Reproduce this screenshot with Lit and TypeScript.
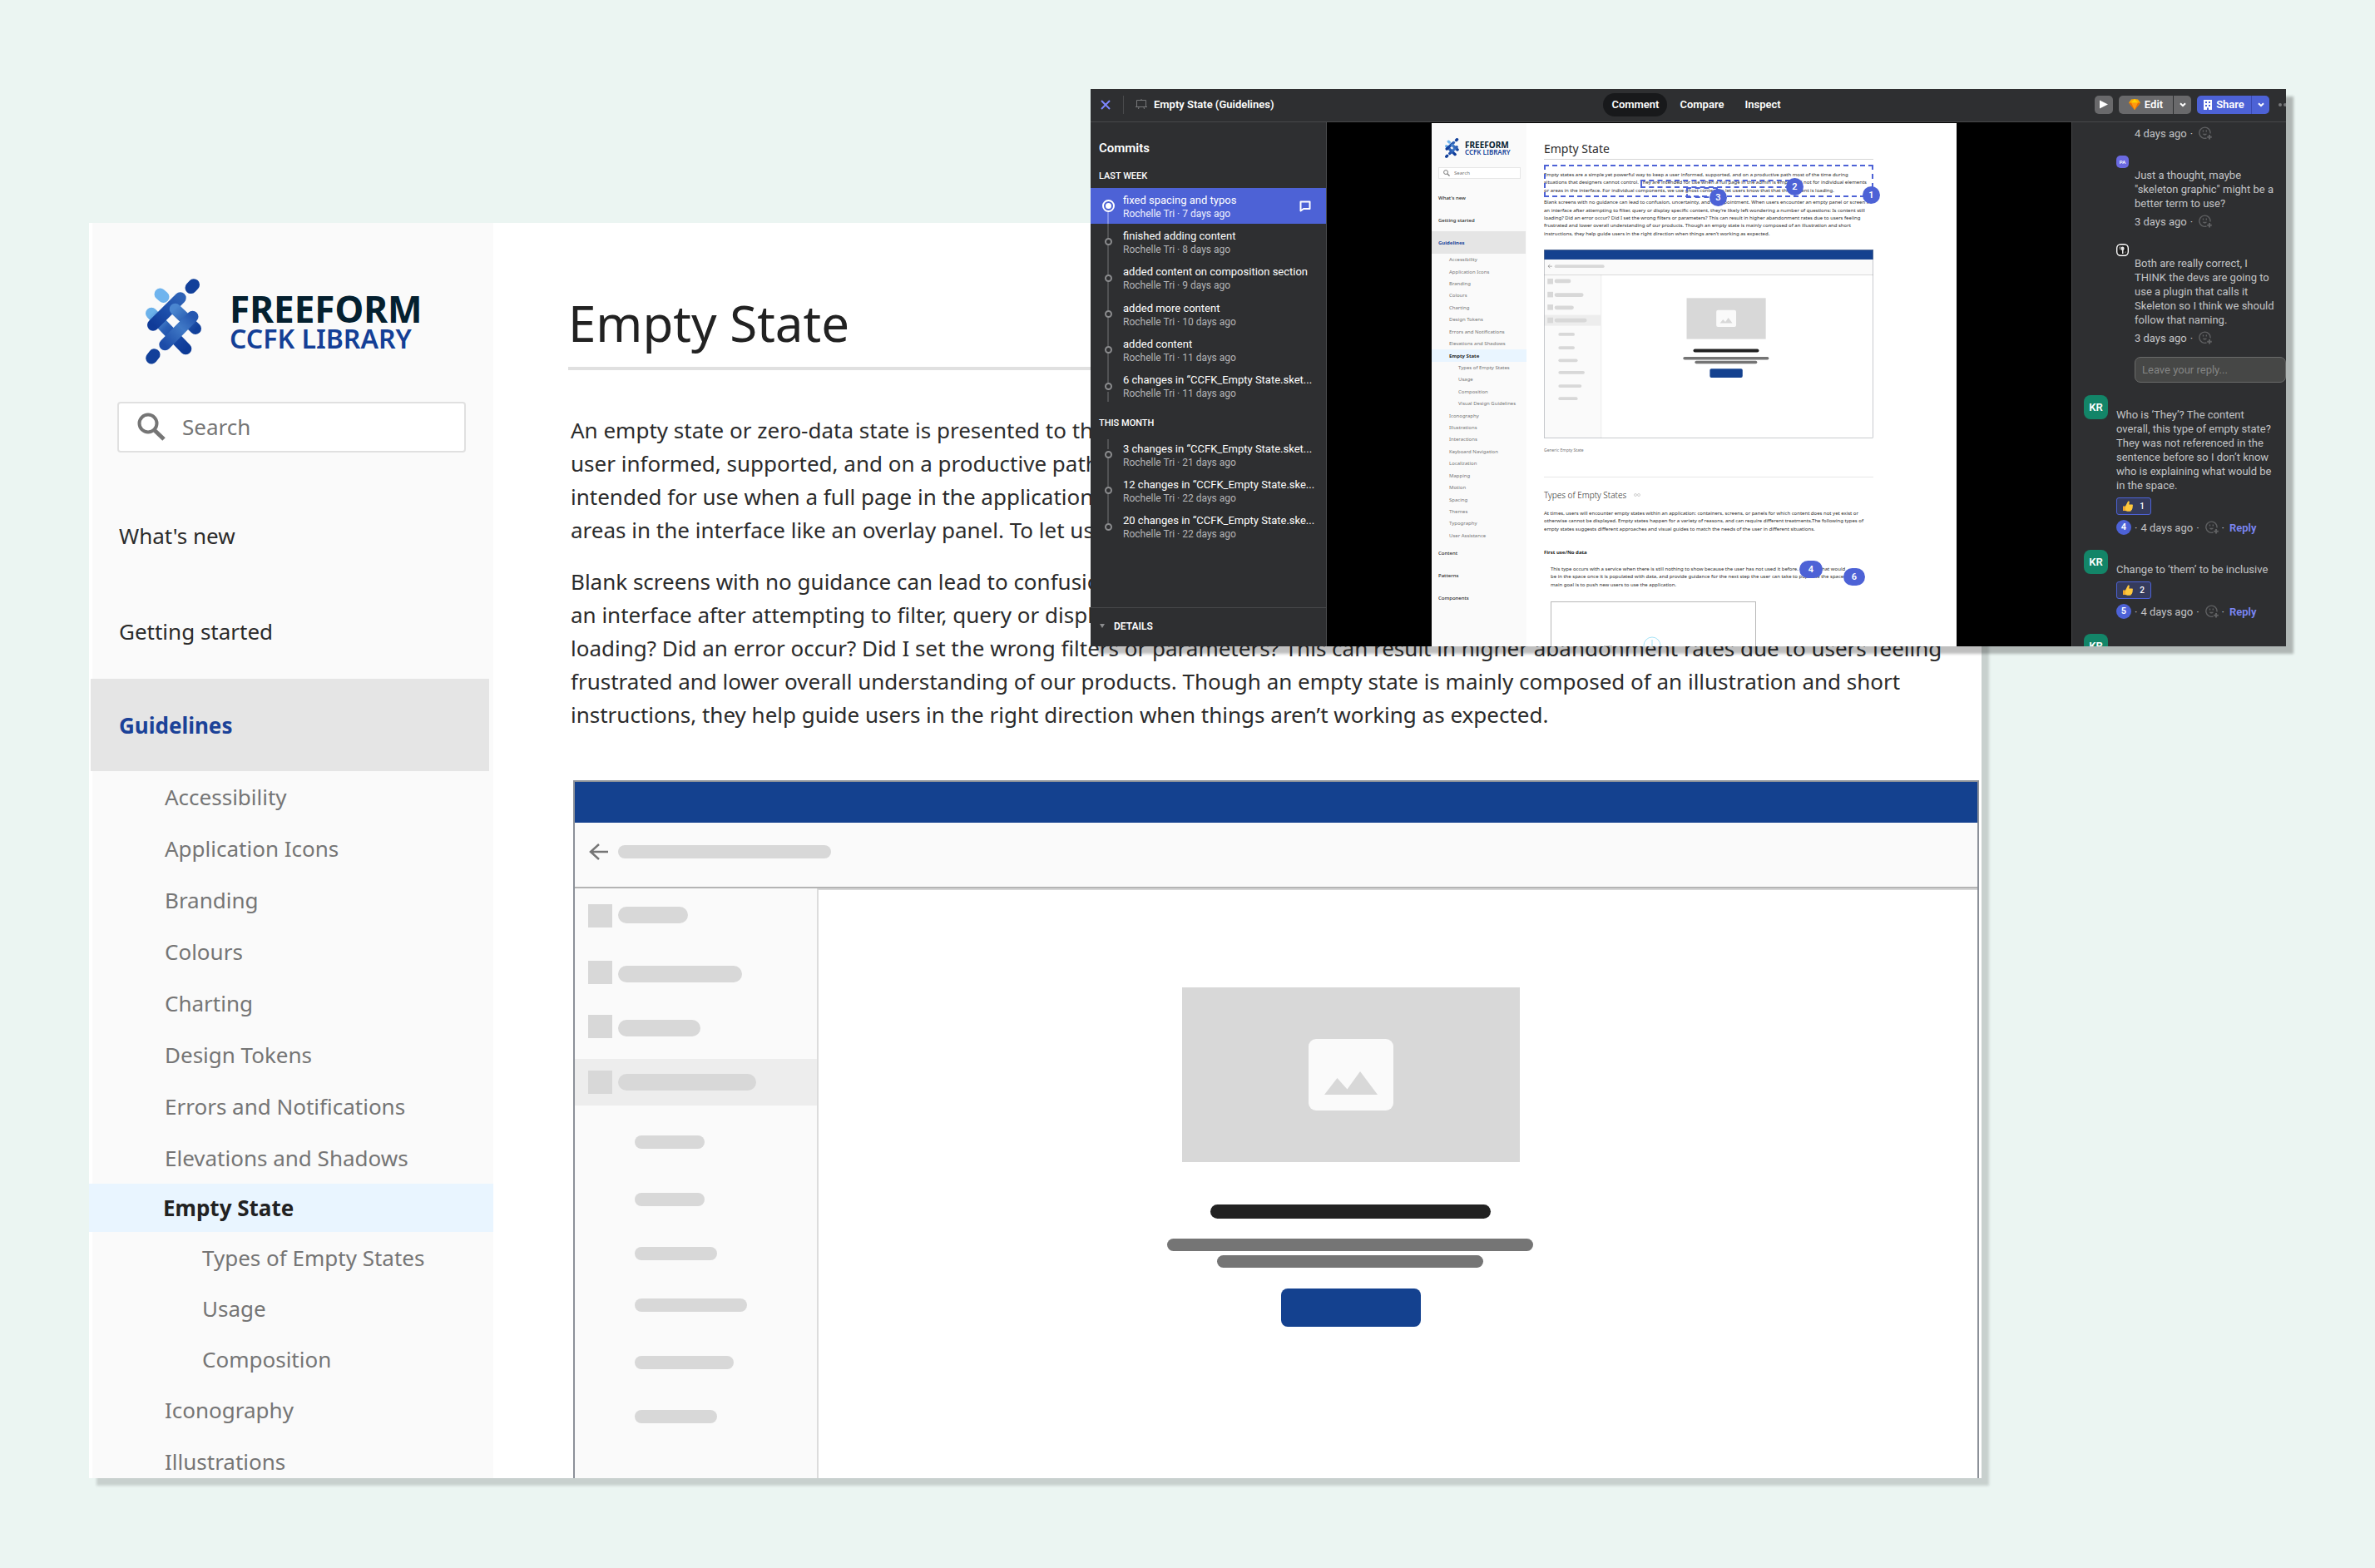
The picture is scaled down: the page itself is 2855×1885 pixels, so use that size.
import { LitElement, html, css, svg, nothing } from "lit";
import { customElement, property } from "lit/decorators.js";
import { classMap } from "lit/directives/class-map.js";

/* ---------- Brand mark ---------- */

@customElement("brand-logo")
export class BrandLogo extends LitElement {
  @property({ type: Boolean, reflect: true }) small = false;

  static styles = css`
    :host { display: flex; align-items: center; gap: 33px; font-family: "Noto Sans", "Open Sans", sans-serif; }
    svg { width: 68px; height: 103px; flex: none; }
    .words { display: flex; flex-direction: column; font-weight: 700; white-space: nowrap; }
    .top { font-size: 44px; line-height: 40px; color: #04202f; }
    .bottom { font-size: 32px; line-height: 32px; color: #143f96; font-weight: 600; }
    :host([small]) { gap: 7px; }
    :host([small]) svg { width: 17px; height: 24px; }
    :host([small]) .top { font-size: 10px; line-height: 9px; }
    :host([small]) .bottom { font-size: 8px; line-height: 8px; }
  `;

  render() {
    return html`
      <svg viewBox="0 0 68 103" preserveAspectRatio="none" fill="none" stroke-linecap="round" aria-hidden="true">
        <defs>
          <linearGradient id="a" gradientUnits="userSpaceOnUse" x1="9" y1="56" x2="42" y2="23">
            <stop offset="0" stop-color="#103b98" /><stop offset=".5" stop-color="#1d4fab" /><stop offset="1" stop-color="#2e62b6" />
          </linearGradient>
          <linearGradient id="b" gradientUnits="userSpaceOnUse" x1="7" y1="42" x2="49" y2="85">
            <stop offset="0" stop-color="#6cb2ea" /><stop offset=".4" stop-color="#2b60b6" /><stop offset=".8" stop-color="#1443a0" /><stop offset="1" stop-color="#0d3a96" />
          </linearGradient>
          <linearGradient id="c" gradientUnits="userSpaceOnUse" x1="35" y1="36" x2="60" y2="61">
            <stop offset="0" stop-color="#4a86d0" /><stop offset="1" stop-color="#12409a" />
          </linearGradient>
          <linearGradient id="d" gradientUnits="userSpaceOnUse" x1="23" y1="80" x2="56" y2="45">
            <stop offset="0" stop-color="#1c4ca8" /><stop offset=".6" stop-color="#4079c6" /><stop offset="1" stop-color="#2557b0" />
          </linearGradient>
        </defs>
        <g stroke-width="14">
          <path d="M54.500 11 58 7.200" stroke="#12409a" />
          <path d="M17.500 18.500 21.500 22" stroke="#6fb4ee" />
          <path d="M7.200 95.500 10.500 91.300" stroke="#12409a" />
          <path d="M7 41.700 48.300 84.300" stroke="url(#b)" />
          <path d="M9 55.700 41.700 23.300" stroke="url(#a)" />
          <path d="M35.700 36.700 60 60" stroke="url(#c)" />
          <path d="M23.300 79.300 56.500 45.700" stroke="url(#d)" />
        </g>
      </svg>
      <span class="words"><span class="top">FREEFORM</span><span class="bottom">CCFK LIBRARY</span></span>
    `;
  }
}

/* ---------- Wireframe illustration of an empty state ---------- */

const MENU = [
  { y: 149, bar: 152, w: 84 },
  { y: 217, bar: 223, w: 149 },
  { y: 282, bar: 288, w: 99 },
  { y: 349, bar: 353, w: 166 },
];
const SUBMENU = [
  { y: 427, w: 84 },
  { y: 496, w: 84 },
  { y: 561, w: 99 },
  { y: 623, w: 135 },
  { y: 692, w: 119 },
  { y: 757, w: 99 },
];

@customElement("empty-wireframe")
export class EmptyWireframe extends LitElement {
  static styles = css`
    :host { display: block; }
    svg { display: block; width: 100%; height: auto; }
  `;

  render() {
    return html`
      <svg viewBox="0 0 1690 968" role="img" aria-label="Generic empty state wireframe">
        <rect width="1690" height="968" fill="#fff" />
        <rect y="51" width="1690" height="78" fill="#fafafa" />
        <rect y="129" width="294" height="839" fill="#fafafa" />
        <rect x="293" y="129" width="2" height="839" fill="#dcdcdc" />
        <rect x="2" y="335" width="291" height="56" fill="#ededed" />
        <rect y="128" width="1690" height="2" fill="#b4b4b4" />
        <rect x="294" y="130" width="1396" height="2" fill="#d6d6d6" />
        <path d="M42 86H22M31 77 21 86l10 9" fill="none" stroke="#757575" stroke-width="2.500" />
        <rect x="54" y="78" width="256" height="16" rx="8" fill="#d8d8d8" />
        ${MENU.map(
          (m) => svg`<rect x="18" y=${m.y} width="29" height="28" fill="#d8d8d8" />
            <rect x="54" y=${m.bar} width=${m.w} height="20" rx="10" fill="#d8d8d8" />`,
        )}
        ${SUBMENU.map((m) => svg`<rect x="74" y=${m.y} width=${m.w} height="16" rx="8" fill="#d8d8d8" />`)}
        <rect x="732" y="249" width="406" height="210" fill="#d8d8d8" />
        <rect x="884" y="311" width="102" height="86" rx="9" fill="#fafafa" />
        <path d="M903 378l15.500-20 12 13.500 15.500-21.500 21 28z" fill="#d8d8d8" />
        <rect x="766" y="510" width="337" height="17" rx="8.500" fill="#222" />
        <rect x="714" y="551" width="440" height="15" rx="7.500" fill="#757575" />
        <rect x="774" y="571" width="320" height="15" rx="7.500" fill="#757575" />
        <rect x="851" y="611" width="168" height="46" rx="8" fill="#14418f" />
        <rect width="1690" height="51" fill="#14418f" />
        <rect x="1" y="1" width="1688" height="966" fill="none" stroke="#8c9199" stroke-width="2" />
      </svg>
    `;
  }
}

/* ---------- Guidelines page content ---------- */

type NavItem = { label: string; sub?: boolean; active?: boolean };

const NAV: NavItem[] = [
  { label: "Accessibility" },
  { label: "Application Icons" },
  { label: "Branding" },
  { label: "Colours" },
  { label: "Charting" },
  { label: "Design Tokens" },
  { label: "Errors and Notifications" },
  { label: "Elevations and Shadows" },
  { label: "Empty State", active: true },
  { label: "Types of Empty States", sub: true },
  { label: "Usage", sub: true },
  { label: "Composition", sub: true },
  { label: "Iconography" },
  { label: "Illustrations" },
];

const MINI_NAV: NavItem[] = [
  ...NAV.slice(0, 12),
  { label: "Visual Design Guidelines", sub: true },
  ...NAV.slice(12),
  ...["Interactions", "Keyboard Navigation", "Localization", "Mapping", "Motion", "Spacing", "Themes", "Typography", "User Assistance"].map(
    (label) => ({ label }),
  ),
];

const magnifier = html`<svg class="glass" viewBox="0 0 34 34" aria-hidden="true">
  <circle cx="13" cy="13" r="10.500" fill="none" stroke="currentColor" stroke-width="4" />
  <path d="M20.500 21 32 32" stroke="currentColor" stroke-width="5" />
</svg>`;

const navLink = (n: NavItem) => html`
  <li><a href="#" class=${classMap({ item: true, sub: !!n.sub, active: !!n.active })}>${n.label}</a></li>
`;

const lines = (list: string[]) => list.map((l) => html`<span class="line">${l} </span>`);

@customElement("guidelines-page")
export class GuidelinesPage extends LitElement {
  static styles = css`
    :host {
      display: grid; grid-template-columns: 486px minmax(0, 1fr); overflow: hidden; background: #fff;
      font-family: "Noto Sans", "Open Sans", sans-serif; font-size: 26px; color: #2b2b2b;
      box-shadow: 9px 9px 3px rgba(0, 0, 0, 0.15);
    }
    .side { background: linear-gradient(to right, #fff 4px, #fafafa 4px); padding-top: 67px; }
    .logo { padding-left: 68px; }
    .search {
      display: flex; align-items: center; gap: 20px; height: 61px; margin: 45px 33px 42px 34px; padding: 0 22px 2px;
      box-sizing: border-box; background: #fff; border: 2px solid #e0e0e0; border-radius: 4px; color: #757575;
    }
    .glass { width: 34px; height: 34px; flex: none; }
    .box { flex: 1; min-width: 0; border: 0; padding: 0; background: none; font: inherit; color: inherit; outline: none; }
    .box::placeholder { color: #757575; opacity: 1; }
    ul { list-style: none; margin: 0; padding: 0; }
    a { color: inherit; text-decoration: none; }
    .top { display: flex; align-items: center; height: 115px; padding-left: 36px; }
    .open { height: 111px; margin: 0 5px 0 2px; padding-left: 34px; background: #e5e5e5; color: #1b4298; font-weight: 700; }
    .item { display: flex; align-items: center; height: 62px; padding-left: 91px; color: #757575; }
    .item.active { height: 58px; background: #e9f5ff; color: #222; font-weight: 700; padding-left: 89px; }
    .item.sub { height: 61px; padding-left: 136px; }
    main { padding: 84px 3px 0 90px; }
    h1 { margin: 0 0 52px; padding-bottom: 17px; border-bottom: 4px solid #e0e0e0; font-weight: 400; font-size: 60px; line-height: 72px; color: #222; }
    p { margin: 0 0 22px 3px; line-height: 40px; }
    .line { display: block; white-space: nowrap; }
    .art { margin: 59px 0 0 6px; }
  `;

  render() {
    return html`
      <nav class="side">
        <brand-logo class="logo"></brand-logo>
        <label class="search">${magnifier}<input class="box" type="search" aria-label="Search" placeholder="Search" /></label>
        <a href="#" class="top">What's new</a>
        <a href="#" class="top">Getting started</a>
        <a href="#" class="top open">Guidelines</a>
        <ul>${NAV.map(navLink)}</ul>
      </nav>
      <main>
        <h1>Empty State</h1>
        <p>
          ${lines([
            "An empty state or zero-data state is presented to the",
            "user informed, supported, and on a productive path",
            "intended for use when a full page in the application",
            "areas in the interface like an overlay panel. To let users",
          ])}
        </p>
        <p>
          ${lines([
            "Blank screens with no guidance can lead to confusion,",
            "an interface after attempting to filter, query or display",
            "loading? Did an error occur? Did I set the wrong filters or parameters? This can result in higher abandonment rates due to users feeling",
            "frustrated and lower overall understanding of our products. Though an empty state is mainly composed of an illustration and short",
            "instructions, they help guide users in the right direction when things aren’t working as expected.",
          ])}
        </p>
        <empty-wireframe class="art"></empty-wireframe>
      </main>
    `;
  }
}

/* ---------- Artboard preview shown inside the review tool ---------- */

@customElement("artboard-preview")
export class ArtboardPreview extends LitElement {
  static styles = css`
    :host {
      position: relative; display: grid; grid-template-columns: 114px minmax(0, 1fr); overflow: hidden; background: #fff;
      font-family: "Noto Sans", "Open Sans", sans-serif; font-size: 6px; color: #2b2b2b;
    }
    .side { background: #fafafa; padding-top: 18px; }
    .logo { padding-left: 16px; }
    .search {
      display: flex; align-items: center; gap: 5px; height: 14px; margin: 11px 7px 9px 8px; padding: 0 5px;
      box-sizing: border-box; background: #fff; border: 1px solid #e6e6e6; color: #757575;
    }
    .glass { width: 8px; height: 8px; flex: none; }
    .box { flex: 1; min-width: 0; border: 0; padding: 0; background: none; font: inherit; color: inherit; outline: none; }
    .box::placeholder { color: #757575; opacity: 1; }
    ul { list-style: none; margin: 0; padding: 0; display: grid; grid-auto-rows: minmax(0, 1fr); height: 346px; }
    li { display: grid; }
    a { color: inherit; text-decoration: none; }
    .top { display: flex; align-items: center; height: 27px; padding-left: 8px; font-weight: 500; }
    .open { background: #e5e5e5; color: #1b4298; font-weight: 700; margin-right: 1px; }
    .item { display: flex; align-items: center; padding-left: 21px; color: #757575; }
    .item.active { background: #e9f5ff; color: #222; font-weight: 700; }
    .item.sub { padding-left: 32px; }
    main { padding: 22px 100px 0 21px; }
    h1 { margin: 0 0 14px; padding-bottom: 4px; border-bottom: 1px solid #d6d6d6; font-weight: 400; font-size: 14px; line-height: 17px; }
    h2 { margin: 0 0 11px; font-weight: 300; font-size: 10px; line-height: 13px; display: flex; align-items: center; gap: 9px; }
    h3 { margin: 19px 0 11px; font-weight: 700; font-size: 6px; line-height: 9px; color: #222; }
    .link { width: 8px; height: 4px; }
    p { margin: 0; display: grid; grid-auto-rows: minmax(0, 1fr); align-items: center; height: 28px; }
    .line { display: block; line-height: 9px; white-space: nowrap; }
    .long { height: 47px; margin: 5px 0 14px; }
    .inset { padding-left: 8px; }
    .caption { margin: 10px 0 28px; font-size: 5px; line-height: 8px; color: #757575; }
    hr { margin: 0 0 15px; border: 0; border-top: 1px solid #e8e8e8; }
    .frame { display: block; width: 247px; height: 80px; margin: 15px 0 0 8px; }

    /* Annotation marks float over the artboard. */
    .region { position: absolute; box-sizing: border-box; border: 2px dashed #4d62d6; }
    .r1 { left: 135px; top: 50px; width: 396px; height: 39px; }
    .r2 { left: 251px; top: 68px; width: 180px; height: 10px; }
    .r3 { left: 306px; top: 77px; width: 38px; height: 13px; }
    .pin {
      position: absolute; height: 21px; min-width: 21px; padding: 0; border: 0; border-radius: 11px; background: #4d62d6; color: #fff;
      font: 600 11px/21px Roboto, sans-serif; text-align: center;
    }
    .p1 { left: 518px; top: 76px; }
    .p2 { left: 426px; top: 66px; }
    .p3 { left: 334px; top: 79px; }
    .p4 { left: 442px; top: 526px; width: 28px; }
    .p6 { left: 495px; top: 535px; width: 26px; }
  `;

  render() {
    return html`
      <nav class="side">
        <brand-logo class="logo" small></brand-logo>
        <label class="search">${magnifier}<input class="box" type="search" aria-label="Search" placeholder="Search" /></label>
        <a href="#" class="top">What's new</a>
        <a href="#" class="top">Getting started</a>
        <a href="#" class="top open">Guidelines</a>
        <ul>${MINI_NAV.map(navLink)}</ul>
        <a href="#" class="top">Content</a>
        <a href="#" class="top">Patterns</a>
        <a href="#" class="top">Components</a>
      </nav>
      <main>
        <h1>Empty State</h1>
        <p>
          ${lines([
            "Empty states are a simple yet powerful way to keep a user informed, supported, and on a productive path most of the time during",
            "situations that designers cannot control. They are intended for use when a full page in the admin is empty and not for individual elements",
            "or areas in the interface. For individual components, we use ghost content to let users know that that the content is loading.",
          ])}
        </p>
        <p class="long">
          ${lines([
            "Blank screens with no guidance can lead to confusion, uncertainty, and disappointment. When users encounter an empty panel or screen in",
            "an interface after attempting to filter, query or display specific content, they’re likely left wondering a number of questions: Is content still",
            "loading? Did an error occur? Did I set the wrong filters or parameters? This can result in higher abandonment rates due to users feeling",
            "frustrated and lower overall understanding of our products. Though an empty state is mainly composed of an illustration and short",
            "instructions, they help guide users in the right direction when things aren’t working as expected.",
          ])}
        </p>
        <empty-wireframe></empty-wireframe>
        <div class="caption">Generic Empty State</div>
        <hr />
        <h2>
          Types of Empty States
          <svg class="link" viewBox="0 0 8 4" fill="none" stroke="#d0d0d0" aria-hidden="true">
            <rect x=".500" y=".500" width="3" height="3" rx="1.500" /><rect x="4.500" y=".500" width="3" height="3" rx="1.500" />
          </svg>
        </h2>
        <p>
          ${lines([
            "At times, users will encounter empty states within an application: containers, screens, or panels for which content does not yet exist or",
            "otherwise cannot be displayed. Empty states happen for a variety of reasons, and can require different treatments.The following types of",
            "empty states suggests different approaches and visual guides to match the needs of the user in different situations.",
          ])}
        </p>
        <h3>First use/No data</h3>
        <p class="inset">
          ${lines([
            "This type occurs with a service when there is still nothing to show because the user has not used it before. Explain what would",
            "be in the space once it is populated with data, and provide guidance for the next step the user can take to populate the space. The",
            "main goal is to push new users to use the application.",
          ])}
        </p>
        <svg class="frame" viewBox="0 0 247 80" fill="none" aria-hidden="true">
          <rect x=".500" y=".500" width="246" height="90" stroke="#b8b8b8" />
          <path d="M64 53.500H74" stroke="#ccc" />
          <circle cx="122" cy="53" r="10" stroke="#a6e3f7" />
          <path d="M122 46v8l5 3" stroke="#a6e3f7" />
        </svg>
      </main>
      <div class="region r1"></div>
      <div class="region r2"></div>
      <div class="region r3"></div>
      ${[1, 2, 3, 4, 6].map((n) => html`<button class="pin p${n}">${n}</button>`)}
    `;
  }
}

/* ---------- Review tool window ---------- */

type Commit = { title: string; when: string; active?: boolean };

const LAST_WEEK: Commit[] = [
  { title: "fixed spacing and typos", when: "7 days ago", active: true },
  { title: "finished adding content", when: "8 days ago" },
  { title: "added content on composition section", when: "9 days ago" },
  { title: "added more content", when: "10 days ago" },
  { title: "added content", when: "11 days ago" },
  { title: "6 changes in “CCFK_Empty State.sket...", when: "11 days ago" },
];
const THIS_MONTH: Commit[] = [
  { title: "3 changes in “CCFK_Empty State.sket...", when: "21 days ago" },
  { title: "12 changes in “CCFK_Empty State.ske...", when: "22 days ago" },
  { title: "20 changes in “CCFK_Empty State.ske...", when: "22 days ago" },
];

const smile = html`<svg class="smile" viewBox="0 0 16 16" fill="none" stroke="#5f6062" stroke-width="1.400" aria-hidden="true">
  <path d="M9.500 14A6.600 6.600 0 1 1 14 8.500" />
  <path d="M4.800 8.800c.8 2.400 4.400 2.400 5.200 0z" fill="#5f6062" stroke="none" />
  <path d="M5.500 4.500v2M9.300 4.500v2" />
  <path d="M13 10v5.500M10.200 12.800h5.600" stroke-width="2" />
</svg>`;

const chevron = html`<svg class="chev" viewBox="0 0 8 6" fill="none" stroke="#fff" stroke-width="2" aria-hidden="true"><path d="M1 1.200 4 4.200 7 1.200" /></svg>`;

const thumb = html`<svg class="thumb" viewBox="0 0 12 13" aria-hidden="true">
  <path d="M0 6.500h3.500v5.500H0z" fill="#f0a72c" />
  <path d="M3 6.500 6 .8c.6-.8 1.900-.4 1.800.8L7.300 4.500h3.500c1.300 0 1.500 1.400.7 1.800.7.500.5 1.500-.2 1.800.5.500.3 1.500-.4 1.800.3.700-.2 1.500-1 1.700 0 .8-.6 1.200-1.500 1.200H5.500L3 12z" fill="#ffc83d" />
</svg>`;

@customElement("review-window")
export class ReviewWindow extends LitElement {
  static styles = css`
    :host {
      display: block; overflow: hidden; background: #2e2f31; color: #fff; font-family: Roboto, "Liberation Sans", sans-serif; font-size: 13px;
      box-shadow: 9px 9px 3px rgba(0, 0, 0, 0.25);
    }
    /* The tool is a little wider than the window that shows it. */
    .tool { display: grid; grid-template-rows: 40px minmax(0, 1fr); height: 100%; margin-right: -16px; }
    button { font: inherit; color: inherit; border: 0; padding: 0; background: none; }
    header { display: grid; grid-template-columns: 1fr auto 1fr; align-items: center; box-sizing: border-box; padding: 0 9px 2px 12px; border-bottom: 1px solid #47484a; font-weight: 600; }
    .doc { display: flex; align-items: center; white-space: nowrap; }
    .close { display: flex; }
    .cross { width: 12px; height: 12px; }
    .rule { width: 1px; height: 22px; margin: 0 14px 0 15px; background: #4a4b4d; }
    .screen { width: 14px; height: 13px; margin-right: 8px; }
    .tabs { display: flex; gap: 5px; }
    .tab { height: 28px; padding: 0 10px; border-radius: 14px; font-weight: 600; }
    .tab.on { background: #18191b; }
    .tools { display: flex; justify-content: flex-end; align-items: center; gap: 7px; }
    .play, .edit, .share { height: 22px; border-radius: 5px; background: #69696b; display: flex; align-items: center; justify-content: center; overflow: hidden; }
    .play { width: 22px; }
    .tri { width: 10px; height: 11px; }
    .main { display: flex; align-items: center; justify-content: center; gap: 5px; width: 65px; height: 22px; font-weight: 600; }
    .more { display: flex; align-items: center; justify-content: center; width: 22px; height: 22px; border-left: 1px solid #2e2f31; }
    .share { background: #4d62d6; }
    .share .more { border-left-color: #3a4ab0; }
    .chev { width: 8px; height: 6px; }
    .gem { width: 14px; height: 13px; }
    .org { width: 10px; height: 12px; }
    .dots { display: flex; gap: 2px; margin-left: 4px; }
    .dot { width: 4px; height: 4px; border-radius: 2px; background: #77787a; }

    .body { display: grid; grid-template-columns: 284px minmax(0, 1fr) 274px; min-height: 0; }
    .commits { display: flex; flex-direction: column; border-right: 1px solid #4a4b4d; box-sizing: border-box; min-height: 0; }
    h2 { margin: 21px 0 16px 10px; font-size: 15px; line-height: 20px; font-weight: 600; }
    h3 { margin: 0 0 6px 10px; font-size: 11px; line-height: 16px; font-weight: 500; }
    .month { margin-top: 15px; margin-bottom: 8px; }
    ol { list-style: none; margin: 0; padding: 0; display: grid; grid-auto-rows: minmax(0, 1fr); }
    .week-list { height: 260px; }
    .month-list { height: 130px; }
    li { display: grid; }
    .commit { display: grid; grid-template-columns: 39px minmax(0, 1fr) 32px; align-items: center; width: 100%; text-align: left; white-space: nowrap; }
    .commit.on { background: #4d62d6; }
    .track { display: grid; grid-template-rows: 1fr auto 1fr; align-self: stretch; justify-items: center; padding-left: 3px; }
    .track::before, .track::after { content: ""; width: 2px; background: #515254; }
    .track.first::before, .track.last::after { background: none; }
    .on .track::after { background: #8291e6; }
    .month-list .track.first::before, .week-list .track.last::after { background: linear-gradient(#515254, #515254) center / 2px 12px no-repeat; }
    .ring { width: 5px; height: 5px; border: 2px solid #8b8c8e; border-radius: 50%; }
    .on .ring { width: 7px; height: 7px; padding: 2px; background: #fff content-box; border-color: #fff; }
    .label { padding-top: 2px; }
    .title { display: block; line-height: 16px; overflow: visible; }
    .who { display: block; line-height: 16px; font-size: 12px; color: #b4b5b7; }
    .on .who { color: #eef0fd; }
    .bubble { width: 14px; height: 14px; }
    .details { display: flex; align-items: center; gap: 11px; box-sizing: border-box; height: 47px; margin-top: auto; padding: 0 0 3px 11px; border-top: 1px solid #47484a; font-size: 12px; font-weight: 600; }
    .down { width: 6px; height: 5px; }

    .canvas { display: flex; justify-content: center; background: #000; padding: 1px 12px 0 0; overflow: hidden; }
    .art { flex: none; width: 631px; }

    .comments { border-left: 1px solid #47484a; padding: 4px 17px 0 14px; overflow: hidden; color: #c3c4c6; }
    .nested { padding-left: 39px; }
    .indent { padding-left: 22px; }
    .meta { display: flex; align-items: center; gap: 4px; height: 18px; margin: 4px 0 18px; white-space: nowrap; }
    .nested .meta { padding-left: 22px; }
    .nested .first-meta { margin-top: 0; }
    .nested .last-meta { margin-bottom: 14px; }
    .smile { width: 16px; height: 16px; margin-left: 3px; }
    .text { margin: 0; line-height: 17px; white-space: pre; }
    .tiny { width: 15px; height: 15px; border-radius: 5px; background: #6a69e0; color: #fff; font-size: 6px; line-height: 15px; font-weight: 600; text-align: center; }
    .photo { display: block; width: 15px; height: 15px; }
    .reply { box-sizing: border-box; display: block; width: 182px; height: 31px; margin: 0 0 15px 61px; padding: 0 8px; border: 1px solid #6a6b6a; border-radius: 7px; background: #464746; font: inherit; color: #fff; }
    .reply::placeholder { color: #848584; opacity: 1; }
    .thread { display: grid; grid-template-columns: 29px 1fr; gap: 10px; }
    .face { width: 29px; height: 29px; border-radius: 8px; background: #138568; color: #fff; line-height: 29px; font-weight: 600; text-align: center; }
    .thread .text { padding-top: 15px; }
    .like { display: flex; align-items: center; justify-content: space-between; box-sizing: border-box; width: 42px; height: 21px; margin: 6px 0; padding: 0 7px; border: 1px solid #4d62d6; border-radius: 3px; background: #353b5c; color: #fff; font-size: 10px; font-weight: 500; }
    .thumb { width: 12px; height: 13px; }
    .thread .meta { margin-top: 0; }
    .num { width: 18px; height: 18px; border-radius: 9px; background: #4d62d6; color: #fff; font-size: 11px; line-height: 18px; font-weight: 600; text-align: center; }
    .answer { color: #7b86f5; font-weight: 600; margin-left: 2px; }
  `;

  private commit(c: Commit, i: number, all: Commit[]) {
    return html`<li>
      <button class=${classMap({ commit: true, on: !!c.active })}>
        <span class=${classMap({ track: true, first: i === 0, last: i === all.length - 1 })}><span class="ring"></span></span>
        <span class="label"><span class="title">${c.title}</span><span class="who">Rochelle Tri · ${c.when}</span></span>
        ${c.active
          ? html`<svg class="bubble" viewBox="0 0 14 14" fill="none" stroke="#fff" stroke-width="2" aria-hidden="true"><path d="M1.500 1.500h11v8.500H5l-3.500 2.500z" stroke-linejoin="round" /></svg>`
          : nothing}
      </button>
    </li>`;
  }

  private thread(text: string, likes: number, id: number) {
    return html`<article class="thread">
      <span class="face">KR</span>
      <div>
        <p class="text">${text}</p>
        <button class="like">${thumb}<span>${likes}</span></button>
        <div class="meta"><span class="num">${id}</span><span>·</span><span>4 days ago</span><span>·</span>${smile}<span>·</span><button class="answer">Reply</button></div>
      </div>
    </article>`;
  }

  render() {
    return html`
      <div class="tool">
        <header>
          <div class="doc">
            <button class="close" aria-label="Close">
              <svg class="cross" viewBox="0 0 12 12" fill="none" stroke="#7b86ff" stroke-width="2" aria-hidden="true"><path d="M1 1l10 10M11 1 1 11" /></svg>
            </button>
            <span class="rule"></span>
            <svg class="screen" viewBox="0 0 14 13" fill="none" stroke="#77787a" aria-hidden="true"><path d="M1.500 1.500h11v8h-11zM0 9.500h14M3.500 12 4 10M10.500 12 10 10M7 0v1.500" /></svg>
            <span>Empty State (Guidelines)</span>
          </div>
          <div class="tabs">
            <button class="tab on">Comment</button><button class="tab">Compare</button><button class="tab">Inspect</button>
          </div>
          <div class="tools">
            <button class="play" aria-label="Play"><svg class="tri" viewBox="0 0 10 11" aria-hidden="true"><path d="M0 .500 10 5.500 0 10.500z" fill="#fff" /></svg></button>
            <div class="edit">
              <button class="main">
                <svg class="gem" viewBox="0 0 14 13" aria-hidden="true">
                  <path d="M3 .5 7 0l4 .5 3 4L7 13 0 4.500z" fill="#fdad00" /><path d="M0 4.500h14L7 13z" fill="#ea6c00" />
                  <path d="M3 4.500h8L7 13z" fill="#fd9a14" /><path d="M3 4.500 7 0l4 4.500z" fill="#fed305" />
                </svg>Edit
              </button>
              <button class="more" aria-label="More edit options">${chevron}</button>
            </div>
            <div class="share">
              <button class="main">
                <svg class="org" viewBox="0 0 10 12" aria-hidden="true"><path fill-rule="evenodd" fill="#fff" d="M0 0h10v12H6V9.500H4V12H0zM2 2v2h2V2zM6 2v2h2V2zM2 6v2h2V6zM6 6v2h2V6z" /></svg>Share
              </button>
              <button class="more" aria-label="More share options">${chevron}</button>
            </div>
            <button class="dots" aria-label="More"><span class="dot"></span><span class="dot"></span><span class="dot"></span></button>
          </div>
        </header>
        <div class="body">
          <section class="commits">
            <h2>Commits</h2>
            <h3>LAST WEEK</h3>
            <ol class="week-list">${LAST_WEEK.map((c, i, all) => this.commit(c, i, all))}</ol>
            <h3 class="month">THIS MONTH</h3>
            <ol class="month-list">${THIS_MONTH.map((c, i, all) => this.commit(c, i, all))}</ol>
            <button class="details"><svg class="down" viewBox="0 0 6 5" aria-hidden="true"><path d="M0 0h6L3 5z" fill="#8b8c8e" /></svg>DETAILS</button>
          </section>
          <section class="canvas"><artboard-preview class="art"></artboard-preview></section>
          <section class="comments">
            <div class="nested">
              <div class="meta first-meta"><span>4 days ago</span><span>·</span>${smile}</div>
              <div class="tiny">PA</div>
              <p class="text indent">${'Just a thought, maybe\n"skeleton graphic" might be a\nbetter term to use?'}</p>
              <div class="meta"><span>3 days ago</span><span>·</span>${smile}</div>
              <svg class="photo" viewBox="0 0 15 15" aria-hidden="true">
                <rect x=".700" y=".700" width="13.600" height="13.600" rx="4.500" fill="#1c1c1c" stroke="#fff" stroke-width="1.400" />
                <path d="M3 4l2-1 1 2-2 3z" fill="#777" /><path d="M6 4c2-1.500 4 0 3.500 2.500L8.500 8v4H7V8L5.500 7z" fill="#e8e8e8" /><path d="M10 10l2-1-1 3z" fill="#777" />
              </svg>
              <p class="text indent">${"Both are really correct, I\nTHINK the devs are going to\nuse a plugin that calls it\nSkeleton so I think we should\nfollow that naming."}</p>
              <div class="meta last-meta"><span>3 days ago</span><span>·</span>${smile}</div>
            </div>
            <input class="reply" aria-label="Leave your reply" placeholder="Leave your reply..." />
            ${this.thread(
              "Who is ‘They’? The content\noverall, this type of empty state?\nThey was not referenced in the\nsentence before so I don’t know\nwho is explaining what would be\nin the space.",
              1,
              4,
            )}
            ${this.thread("Change to ‘them’ to be inclusive", 2, 5)}
            <article class="thread"><span class="face">KR</span></article>
          </section>
        </div>
      </div>
    `;
  }
}

/* ---------- Desktop ---------- */

@customElement("app-root")
export class AppRoot extends LitElement {
  static styles = css`
    :host { position: relative; display: grid; box-sizing: border-box; height: 100vh; padding: 268px 473px 108px 107px; background: #ebf5f2; overflow: hidden; }
    .page { min-width: 0; min-height: 0; }
    .review { position: absolute; left: 1311px; right: 107px; top: 107px; height: 670px; }
  `;

  render() {
    return html`
      <guidelines-page class="page"></guidelines-page>
      <review-window class="review"></review-window>
    `;
  }
}
